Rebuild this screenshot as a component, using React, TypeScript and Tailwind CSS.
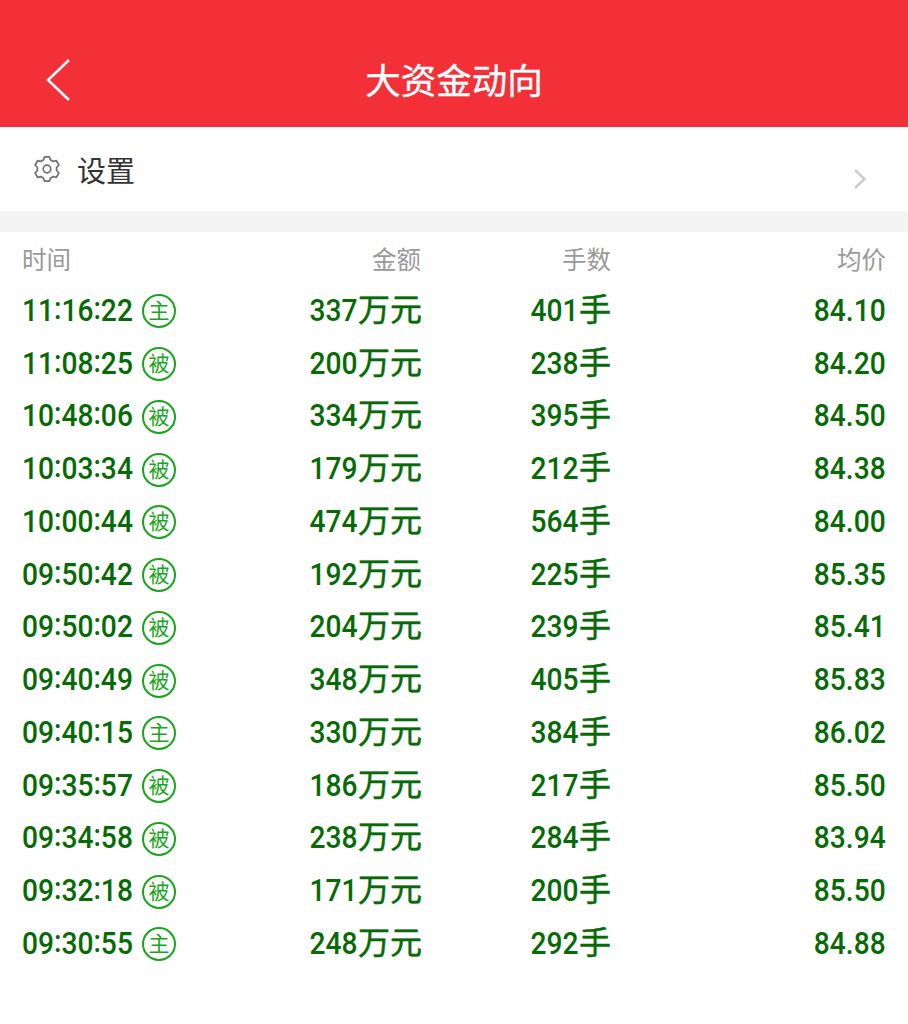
interface Trade {
    time: string
    type: "主" | "被"
    amount: number
    hands: number
    price: string
}

const trades: Trade[] = [
    { time: "11:16:22", type: "主", amount: 337, hands: 401, price: "84.10" },
    { time: "11:08:25", type: "被", amount: 200, hands: 238, price: "84.20" },
    { time: "10:48:06", type: "被", amount: 334, hands: 395, price: "84.50" },
    { time: "10:03:34", type: "被", amount: 179, hands: 212, price: "84.38" },
    { time: "10:00:44", type: "被", amount: 474, hands: 564, price: "84.00" },
    { time: "09:50:42", type: "被", amount: 192, hands: 225, price: "85.35" },
    { time: "09:50:02", type: "被", amount: 204, hands: 239, price: "85.41" },
    { time: "09:40:49", type: "被", amount: 348, hands: 405, price: "85.83" },
    { time: "09:40:15", type: "主", amount: 330, hands: 384, price: "86.02" },
    { time: "09:35:57", type: "被", amount: 186, hands: 217, price: "85.50" },
    { time: "09:34:58", type: "被", amount: 238, hands: 284, price: "83.94" },
    { time: "09:32:18", type: "被", amount: 171, hands: 200, price: "85.50" },
    { time: "09:30:55", type: "主", amount: 248, hands: 292, price: "84.88" },
]

function GearIcon() {
    return (
        <svg
            className="ml-px h-7 w-7"
            viewBox="-14 -14 28 28"
            fill="none"
            stroke="#6f6f6f"
            strokeWidth="1.7"
            strokeLinejoin="round"
        >
            <path d="M-2.4-12.2H2.4L3.4-9.2 6.2-7.6 9.4-8.3 11.9-4 9.6-1.5V1.5L11.9 4 9.4 8.3 6.2 7.6 3.4 9.2 2.4 12.2H-2.4L-3.4 9.2-6.2 7.6-9.4 8.3-11.9 4-9.6 1.5V-1.5L-11.9-4-9.4-8.3-6.2-7.6-3.4-9.2z" />
            <circle r="3.8" />
        </svg>
    )
}

function Unit({ text }: { text: string }) {
    return (
        <span className="font-normal [-webkit-text-stroke:0.5px_#066b06]">
            {text}
        </span>
    )
}

function TradeRow({ trade }: { trade: Trade }) {
    return (
        <div className="flex h-[52.75px] items-center text-[32px] leading-none font-medium text-[#066b06]">
            <div className="flex w-[200px] items-center">
                <div className="w-[120px]">
                    <span className="inline-block origin-left scale-x-[0.88]">
                        {trade.time.split(":").map((part, i) => (
                            <span key={i}>
                                {i > 0 && (
                                    <span className="relative -top-[2px]">
                                        :
                                    </span>
                                )}
                                {part}
                            </span>
                        ))}
                    </span>
                </div>
                <span className="mt-[3px] flex h-[34px] w-[34px] items-center justify-center rounded-full border-2 border-[#18a51c] pt-px text-[21px] leading-none font-normal text-[#18a51c]">
                    {trade.type}
                </span>
            </div>
            <div className="w-[200px] text-right">
                <span className="inline-block origin-right scale-x-[0.88]">
                    {trade.amount}
                </span>
                <Unit text="万元" />
            </div>
            <div className="w-[189px] text-right">
                <span className="inline-block origin-right scale-x-[0.88]">
                    {trade.hands}
                </span>
                <Unit text="手" />
            </div>
            <div className="flex-1 text-right">
                <span className="inline-block origin-right scale-x-[0.88]">
                    {trade.price}
                </span>
            </div>
        </div>
    )
}

export default function App() {
    return (
        <div className="h-[1024px] w-[908px] overflow-hidden bg-white font-[Roboto,'Noto_Sans_CJK_SC',sans-serif]">
            <header className="flex h-[127px] items-center bg-[#f33038] px-[45px] pt-[34px]">
                <svg
                    className="mb-[2px] h-[44px] w-[26px]"
                    viewBox="0 0 26 44"
                    fill="none"
                    stroke="white"
                    strokeWidth="2.5"
                >
                    <path d="M24 2 3 22 24 42" />
                </svg>
                <h1 className="flex-1 pt-[5px] pr-[26px] text-center text-[35.5px] leading-none font-normal text-white [-webkit-text-stroke:0.4px_white]">
                    大资金动向
                </h1>
            </header>

            <div className="flex h-[84px] items-center pr-[41px] pl-[32px] text-[#333333]">
                <GearIcon />
                <span className="ml-[16px] flex-1 pt-[6px] text-[29px] leading-none">
                    设置
                </span>
                <svg
                    className="mt-[20px] h-[22px] w-[14px]"
                    viewBox="0 0 14 22"
                    fill="none"
                    stroke="#cccccc"
                    strokeWidth="2.5"
                >
                    <path d="M2 2 11.5 11 2 20" />
                </svg>
            </div>

            <div className="h-[21px] bg-[#f4f4f4]" />

            <div className="px-[22px]">
                <div className="flex h-[51.5px] items-center pt-[6px] text-[24.5px] leading-none text-[#999999]">
                    <div className="w-[200px]">时间</div>
                    <div className="w-[199px] text-right">金额</div>
                    <div className="w-[190px] text-right">手数</div>
                    <div className="flex-1 text-right">均价</div>
                </div>
                {trades.map((trade) => (
                    <TradeRow key={trade.time} trade={trade} />
                ))}
            </div>
        </div>
    )
}
